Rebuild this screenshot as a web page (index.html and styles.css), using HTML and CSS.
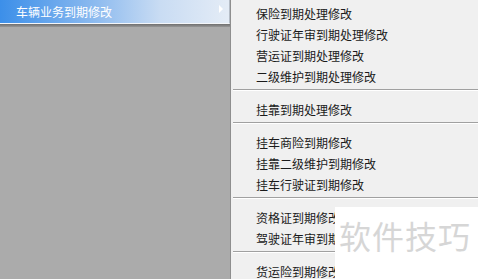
FILE: index.html
```html
<!DOCTYPE html>
<html lang="zh-CN">
<head>
    <meta charset="UTF-8">
    <meta name="viewport" content="width=device-width, initial-scale=1.0">
    <title>车辆业务到期修改</title>
    <link rel="stylesheet" href="styles.css">
</head>
<body>
    <div class="screen">
        <div class="side">
            <div class="side-item">
                <span>车辆业务到期修改</span>
                <span class="arrow"></span>
            </div>
            <div class="side-shadow"></div>
        </div>

        <div class="menu">
            <div class="item">保险到期处理修改</div>
            <div class="item">行驶证年审到期处理修改</div>
            <div class="item">营运证到期处理修改</div>
            <div class="item">二级维护到期处理修改</div>
            <div class="sep"></div>
            <div class="item">挂靠到期处理修改</div>
            <div class="sep"></div>
            <div class="item">挂车商险到期修改</div>
            <div class="item">挂靠二级维护到期修改</div>
            <div class="item">挂车行驶证到期修改</div>
            <div class="sep"></div>
            <div class="item">资格证到期修改</div>
            <div class="item">驾驶证年审到期修改</div>
            <div class="sep"></div>
            <div class="item">货运险到期修改</div>

            <div class="watermark">软件技巧</div>
        </div>
    </div>
</body>
</html>
```

FILE: styles.css
```css
body {
    margin: 0;
    background-color: #ababab;
    font-family: "Noto Sans CJK SC", "Microsoft YaHei", sans-serif;
    font-size: 12px;
    overflow: hidden;
}
.screen {
    display: flex;
    height: 279px;
}
.side {
    width: 230px;
    flex-shrink: 0;
}
.side-item {
    height: 23px;
    line-height: 23px;
    padding-left: 16px;
    padding-right: 6px;
    display: flex;
    justify-content: space-between;
    align-items: center;
    color: #ffffff;
    background: linear-gradient(to right, #3c8fe9 0%, #7fb3ee 35%, #c9dcf3 70%, #e4ecf6 100%);
    border-right: 1px solid #b4bcc6;
    border-bottom: 1px solid #f4f6f9;
}
.arrow {
    width: 0;
    height: 0;
    border-top: 4px solid transparent;
    border-bottom: 4px solid transparent;
    border-left: 4px solid #ffffff;
    margin-top: -6px;
}
.side-shadow {
    height: 3px;
    background: linear-gradient(to bottom, #6f6f6f, #969696);
}
.menu {
    position: relative;
    flex: 1;
    padding-top: 3px;
    background-color: #f0f0f0;
    border-left: 1px solid #8e8e8e;
    color: #1a1a1a;
}
.item {
    height: 21px;
    line-height: 21px;
    padding-left: 25px;
    white-space: nowrap;
}
.sep {
    height: 1px;
    margin: 2px 0 8px 2px;
    background-color: #a0a0a0;
    border-bottom: 1px solid #ffffff;
}
.watermark {
    position: absolute;
    left: 104px;
    top: 207px;
    right: 0;
    bottom: 0;
    background-color: #ffffff;
    color: #d6d6d6;
    font-size: 32px;
    line-height: 56px;
    padding-left: 4px;
    letter-spacing: 1px;
    white-space: nowrap;
}
```
